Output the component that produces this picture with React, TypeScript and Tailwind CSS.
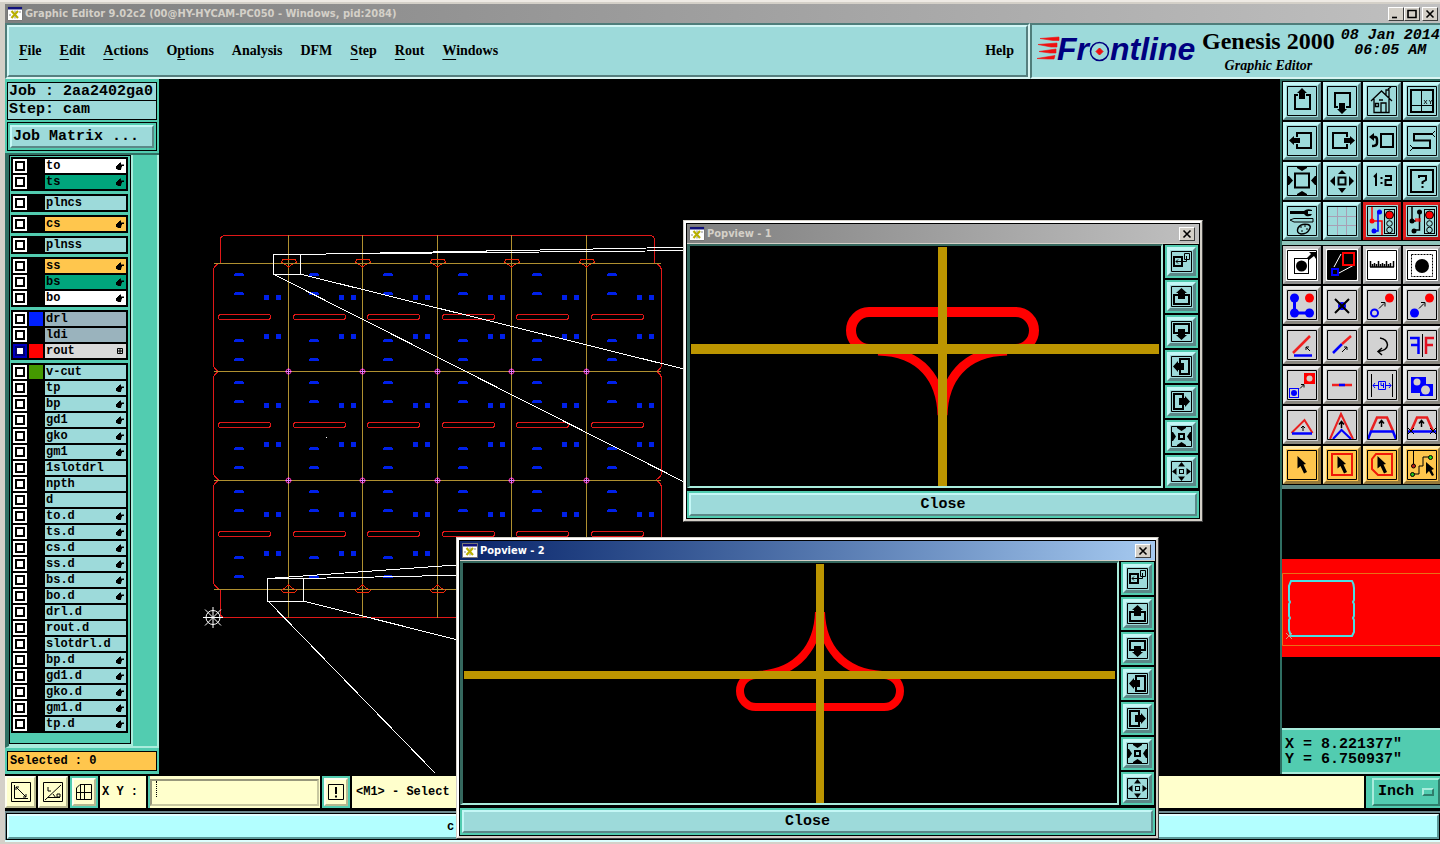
import type { ReactNode } from "react";

const MONO = "font-['Liberation_Mono',monospace]";
const SERIF = "font-['Liberation_Serif',serif]";
const TITLE = "font-['DejaVu_Sans_Condensed','DejaVu_Sans',sans-serif]";

const RAISED_AQUA =
  "border-[3px] border-t-[#c4f7f6] border-l-[#c4f7f6] border-r-[#5b8888] border-b-[#5b8888] bg-[#9ddada]";

/* ---------- layers ---------- */

type Layer = {
  name: string;
  tone?: "white" | "green" | "amber" | "slate" | "grey";
  hand?: boolean;
  swatch?: "blue" | "red" | "olive";
  active?: boolean;
};

const LAYER_GROUPS: Layer[][] = [
  [
    { name: "to", tone: "white", hand: true },
    { name: "ts", tone: "green", hand: true },
  ],
  [{ name: "plncs" }],
  [{ name: "cs", tone: "amber", hand: true }],
  [{ name: "plnss" }],
  [
    { name: "ss", tone: "amber", hand: true },
    { name: "bs", tone: "green", hand: true },
    { name: "bo", tone: "white", hand: true },
  ],
  [
    { name: "drl", tone: "slate", swatch: "blue" },
    { name: "ldi", tone: "slate" },
    { name: "rout", tone: "grey", swatch: "red", active: true },
  ],
  [
    { name: "v-cut", swatch: "olive" },
    { name: "tp", hand: true },
    { name: "bp", hand: true },
    { name: "gd1", hand: true },
    { name: "gko", hand: true },
    { name: "gm1", hand: true },
    { name: "1slotdrl" },
    { name: "npth" },
    { name: "d" },
    { name: "to.d", hand: true },
    { name: "ts.d", hand: true },
    { name: "cs.d", hand: true },
    { name: "ss.d", hand: true },
    { name: "bs.d", hand: true },
    { name: "bo.d", hand: true },
    { name: "drl.d" },
    { name: "rout.d" },
    { name: "slotdrl.d" },
    { name: "bp.d", hand: true },
    { name: "gd1.d", hand: true },
    { name: "gko.d", hand: true },
    { name: "gm1.d", hand: true },
    { name: "tp.d", hand: true },
  ],
];

const TONES = {
  white: "bg-white",
  green: "bg-[#00a57c]",
  amber: "bg-[#ffc64d]",
  slate: "bg-[#9ab3bd]",
  grey: "bg-[#d9d9d9]",
};

const SWATCHES = {
  blue: "bg-[#0020ff]",
  red: "bg-[#ff0000]",
  olive: "bg-[#449900]",
};

function LayerRow({ layer }: { layer: Layer }) {
  return (
    <label className="flex h-3.5 gap-0.5">
      <span className={`flex size-3.5 p-0.5 ${layer.active ? "bg-[#0000c0]" : "bg-white"}`}>
        <input
          type="checkbox"
          className={`block size-2.5 appearance-none border-2 bg-white ${layer.active ? "border-[#000070]" : "border-black"}`}
        />
      </span>
      <span className={`size-3.5 ${layer.swatch ? SWATCHES[layer.swatch] : "bg-black"}`} />
      <span
        className={`flex flex-1 items-center justify-between pr-0.5 pl-px text-[12px] leading-[14px] font-bold ${MONO} ${layer.tone ? TONES[layer.tone] : "bg-[#9ddada]"}`}
      >
        {layer.name}
        {layer.hand && (
          <svg width="8" height="8" viewBox="0 0 8 8" aria-hidden="true">
            <path d="M3 1h1.5V0H5v2.5h3V4H6v1H5.5v1.5H5V8H1.5V7H0V4h1V3h1V2h1z" />
          </svg>
        )}
        {layer.active && (
          <svg width="6" height="6" viewBox="0 0 6 6" aria-hidden="true" className="mr-px">
            <path d="M.5.5h5v5h-5zM3 0v6M0 3h6" fill="none" stroke="#000" />
          </svg>
        )}
      </span>
    </label>
  );
}

function LeftPanel() {
  return (
    <aside className="flex w-[154px] shrink-0 flex-col bg-[#52ccb0]">
      <div className={`flex flex-col border-b-2 border-[#2f6e62] px-0.5 pt-[3px] pb-0.5 text-[15px] ${MONO} font-bold`}>
        <div className="h-[19px] border border-black bg-[#9ddada] pl-px leading-[18px] whitespace-nowrap">
          Job : 2aa2402ga0
        </div>
        <div className="h-[19px] border border-t-0 border-black bg-[#9ddada] pl-px leading-[18px]">Step: cam</div>
        <div className="mt-0.5 border border-black p-0.5">
          <button className="block h-[23px] w-full border-2 border-t-[#c4f7f6] border-r-[#5b8888] border-b-[#5b8888] border-l-[#c4f7f6] bg-[#9ddada] px-px text-left leading-[18px]">
            Job Matrix ...
          </button>
        </div>
      </div>
      <div className="flex flex-1 items-start border-r-2 border-b-2 border-l-4 border-r-[#a9ecdc] border-b-[#a9ecdc] border-l-[#2f6e62]">
        <div className="w-[124px] border-r-2 border-b-2 border-[#a9ecdc]">
          <div className="flex flex-col gap-[3px] border border-black pt-px pr-0.5 pb-2.5 pl-px">
            {LAYER_GROUPS.map((group, i) => (
              <div key={i} className="flex flex-col gap-0.5 bg-black p-0.5">
                {group.map((layer) => (
                  <LayerRow key={layer.name} layer={layer} />
                ))}
              </div>
            ))}
          </div>
        </div>
      </div>
      <div className="px-0.5 pt-[3px] pb-[3px]">
        <div className={`h-5 border border-black bg-[#ffc64d] pl-0.5 text-[12px] leading-[18px] font-bold ${MONO}`}>
          Selected : 0
        </div>
      </div>
    </aside>
  );
}

/* ---------- board canvas ---------- */

const COLS = [213.5, 288.5, 362.5, 437.5, 511.5, 586.5];
const ROWS = [263.5, 371.5, 480.5];

function Board() {
  return (
    <svg
      viewBox="159 79 1121 694"
      preserveAspectRatio="xMinYMin meet"
      className="absolute inset-0 size-full"
      fill="none"
      shapeRendering="crispEdges"
      role="img"
      aria-label="Panel layout"
    >
      <g stroke="#e01818">
        <path d="M220.5 263V240Q220.5 235.5 225 235.5H650Q654.5 235.5 654.5 240V263" />
        <path d="M220.5 589V613Q220.5 617.5 225 617.5H650Q654.5 617.5 654.5 613V589" />
        {ROWS.map((y, i) => (
          <path
            key={y}
            d={`M219 ${y}Q213.5 ${y + 2} 213.5 ${y + 8}V${y + 101}Q213.5 ${y + 105} 219 ${i === 2 ? 589 : y + 108.5}M656 ${y}Q661.5 ${y + 2} 661.5 ${y + 8}V${y + 101}Q661.5 ${y + 105} 656 ${i === 2 ? 589 : y + 108.5}`}
          />
        ))}
      </g>
      {ROWS.map((y) =>
        COLS.map((x) => (
          <g key={`${x}-${y}`}>
            <rect x={x + 5} y={y + 51} width="52" height="5" rx="2.5" stroke="#e01818" />
            {[9.5, 28.5, 75.5, 94.5].map((dy) => (
              <path key={dy} d={`M${x + 21.5} ${y + dy}h8v1h1v2h-10v-2h1z`} fill="#0020e8" />
            ))}
            {[33.5, 72.5].map((dy) => (
              <path
                key={dy}
                d={`M${x + 50.5} ${y + dy - 2}h5v5h-5zM${x + 62.5} ${y + dy - 2}h5v5h-5z`}
                fill="#0020e8"
              />
            ))}
          </g>
        )),
      )}
      <g stroke="#b09030">
        {COLS.slice(1).map((x) => (
          <path key={x} d={`M${x} 235V618`} />
        ))}
        {[...ROWS, 589.5].map((y) => (
          <path key={y} d={`M214 ${y}H661`} />
        ))}
      </g>
      {COLS.slice(1).map((x) => (
        <g key={x}>
          <g stroke="#f02808">
            <path d={`M${x - 6} 263.5l-1-2 2-2.5h11l2 2.5-1 2M${x - 4} 264l4 3 4-3`} />
            <path d={`M${x - 6} 589.5l-1 1 2 2h11l2-2-1-1M${x - 5} 589l5-4 5 4`} />
          </g>
          {[371.5, 480.5].map((y) => (
            <g key={y} shapeRendering="auto">
              <circle cx={x} cy={y} r="2.5" stroke="#ff30b0" />
              <path d={`M${x - 3} ${y}h6M${x} ${y - 3}v6`} stroke="#e080ff" />
            </g>
          ))}
        </g>
      ))}
      <g stroke="#fff">
        <path d="M273.5 254.5h27v20h-27zM300 254.500L700 247M273 254.500L700 250.500M300 274L700 373M273 274L700 490" />
        <path d="M267.500 578.500h36v23h-36zM268 578.500L470 564M303 578.500L470 575M303 601L470 643M268 601L435 773" />
        <path d="M326 437.500h1" />
        <g shapeRendering="auto">
          <circle cx="213" cy="617.500" r="7" />
          <path d="M203 617.500h20M213 607v21M205 609.500l16 16M221 609.500l-16 16" />
        </g>
      </g>
    </svg>
  );
}

/* ---------- tool icons, drawn on a 30 by 30 grid ---------- */

const K = "#000";
const B = "#0000ff";
const R = "#ff0000";

const cursor = (
  <path d="M10.500 6L19 14L16.500 14.500L20 22L17 23.500L13.500 16L10.500 18.500Z" fill={K} />
);
const smallArrow = <path d="M12 18.500L17 13.500M14 12.500H18V16.500" fill="none" stroke={K} />;
const upArrow = (y: number) => (
  <path d={`M14.500 ${y + 7}V${y}M12 ${y + 3.5}L14.500 ${y + 0.5}L17 ${y + 3.5}`} fill="none" stroke={K} strokeWidth="1.500" />
);
const trafficLight = (
  <>
    <rect x="17.500" y="3.500" width="10" height="24" fill="none" stroke={K} />
    <circle cx="22.500" cy="9" r="4" fill={R} stroke={K} />
    <circle cx="22.500" cy="17.500" r="2.800" fill="none" stroke={K} />
    <circle cx="22.500" cy="24" r="2.800" fill="none" stroke={K} />
  </>
);

type Icon = [string, ReactNode];

const NAV_ICONS: Icon[] = [
  [
    "Pan up",
    <>
      <path d="M11 9H8V23H23V9H19" fill="none" stroke={K} strokeWidth="2" />
      <path d="M15 2L20 7H18V13H12V7H10Z" />
    </>,
  ],
  [
    "Pan down",
    <>
      <path d="M11 21H8V7H23V21H19" fill="none" stroke={K} strokeWidth="2" />
      <path d="M15 28L20 23H18V17H12V23H10Z" />
    </>,
  ],
  [
    "Home view",
    <path
      key="p"
      d="M4 15L14.500 5L25 15M7 13V26.500H22V13M14 26V17H19V26M8.500 17.500H11.500V20.500H8.500ZM19 9V4H22V12M21 3L24 1M12 14H16"
      fill="none"
      stroke={K}
      strokeWidth="1.300"
    />,
  ],
  [
    "Go to XY",
    <>
      <rect x="4" y="4" width="22" height="22" fill="none" stroke={K} strokeWidth="2" />
      <path d="M14.500 4V26M4 19.500H26" stroke={K} fill="none" />
      <path d="M17 14L20 18M20 14L17 18M22 14L23.500 16L25 14M23.500 16V18" stroke={K} fill="none" strokeWidth=".8" />
    </>,
  ],
  [
    "Pan left",
    <>
      <path d="M10 11V7H24V22H10V18" fill="none" stroke={K} strokeWidth="2" />
      <path d="M2 14.500L7 10V12H13V17H7V19Z" />
    </>,
  ],
  [
    "Pan right",
    <>
      <path d="M20 11V7H6V22H20V18" fill="none" stroke={K} strokeWidth="2" />
      <path d="M28 14.500L23 10V12H17V17H23V19Z" />
    </>,
  ],
  [
    "Previous view",
    <>
      <rect x="14" y="8" width="12" height="13" fill="none" stroke={K} strokeWidth="2" />
      <path d="M5 11H8Q10 11 10 14V17Q10 20 5 20" fill="none" stroke={K} strokeWidth="2.500" />
      <path d="M2 11L7 7V15Z" />
    </>,
  ],
  [
    "Serpentine",
    <>
      <path d="M25 8H7V14.500H23V22H6" fill="none" stroke={K} strokeWidth="2" />
      <path d="M25 8L28 5M25 8L28 11M6 22L3 19M6 22L3 25" fill="none" stroke={K} />
    </>,
  ],
  [
    "Zoom in",
    <>
      <rect x="8" y="7.500" width="14" height="14" fill="none" stroke={K} strokeWidth="2" />
      <path d="M10 1H20V2L15 5L10 2ZM10 29H20V28L15 25L10 28ZM1 10V19H2L6 14.500L2 10ZM29 10V19H28L24 14.500L28 10Z" />
    </>,
  ],
  [
    "Zoom out",
    <>
      <rect x="11.500" y="11.500" width="7" height="7" fill="none" stroke={K} strokeWidth="2" />
      <path d="M15 4L19 8H11ZM15 27L19 22H11ZM3 15L8 10V20ZM27 15L22 10V20Z" />
    </>,
  ],
  [
    "Scale one to two",
    <path key="p" d="M7 11L9 9V20M14.500 11V13M14.500 16V18M18 10H24V14H18.500V19H25" fill="none" stroke={K} strokeWidth="2" />,
  ],
  [
    "Query",
    <>
      <rect x="4" y="4" width="22" height="22" fill="none" stroke={K} strokeWidth="2" />
      <path d="M12 12V10H19V14L15.500 16V18M15.500 20V22" fill="none" stroke={K} strokeWidth="2" />
    </>,
  ],
  [
    "Settings",
    <>
      <path d="M3 5H18V8H3ZM17 5Q20 2 25 4V5H21V8H25Q24 11 19 10L17 8Z" />
      <path d="M3 14L7 12.500H26V16H7Z" fill="none" stroke={K} />
      <path d="M11 22Q14 17 21 18.500Q25 20 22 24Q20 28 14 28Q9 27 11 22Z" fill="none" stroke={K} strokeWidth="1.500" />
      <path d="M13 21H15M17 20H19M19 23H21M14 25H16" stroke={K} />
    </>,
  ],
  ["Grid", <path key="p" d="M10.500 1V29M19.500 1V29M1 10.500H29M1 19.500H29" stroke="#a8a0b4" fill="none" />],
];

const NET_ICONS: Icon[] = [
  [
    "Net compare",
    <>
      <path d="M5 1V15H15V29" fill="none" stroke={R} strokeWidth="1.500" />
      <path d="M13 6H11V25H7" fill="none" stroke={B} strokeWidth="1.500" />
      <circle cx="5" cy="15" r="2.500" fill={R} />
      <circle cx="12.500" cy="6" r="2.500" fill={B} />
      <circle cx="7" cy="25" r="2.500" fill={B} />
      {trafficLight}
    </>,
  ],
  [
    "Net measure",
    <>
      <path d="M5 1V15M12.500 6V24H7M5 15H9" fill="none" stroke={K} strokeWidth="1.500" />
      <path d="M8 14H13M9 12V16M11 12V16M13 12V16" stroke={R} fill="none" />
      <circle cx="5" cy="15" r="2.500" />
      <circle cx="12.500" cy="6" r="2.500" />
      <circle cx="7" cy="25" r="2.500" />
      {trafficLight}
    </>,
  ],
];

const MODE_ICONS: Icon[] = [
  [
    "Add feature",
    <>
      <rect x="7.500" y="8.500" width="14" height="15" fill="none" stroke={K} />
      <circle cx="14.500" cy="16" r="5.500" />
      <path d="M20 8L24 4L22 2H29V9L27 6L22 10Z" />
    </>,
  ],
  [
    "Popview",
    <>
      <path d="M1 1H29V29H1Z" />
      <path d="M7 17L14 4M12 23L27 15" stroke="#fff" fill="none" />
      <rect x="16" y="3" width="11" height="12" fill="none" stroke={R} strokeWidth="2" />
      <rect x="5" y="19" width="6" height="6" fill="none" stroke={B} strokeWidth="2" />
    </>,
  ],
  [
    "Measure",
    <path
      key="p"
      d="M3 17H27M3.500 11V17M5.500 14V17M7.500 13V17M9.500 14V17M11.500 11V17M13.500 14V17M15.500 13V17M17.500 14V17M19.500 11V17M21.500 14V17M23.500 13V17M26.500 11V17"
      stroke={K}
      fill="none"
      strokeWidth="1.500"
    />,
  ],
  [
    "Select feature",
    <>
      <rect x="4.500" y="4.500" width="21" height="22" fill="none" stroke={K} strokeDasharray="2 1" />
      <circle cx="15" cy="16" r="7" />
    </>,
  ],
];

const EDIT_ICONS: Icon[] = [
  [
    "Copy to layer",
    <>
      <path d="M7.500 8V23H22" fill="none" stroke={B} strokeWidth="3" />
      <circle cx="7.500" cy="8" r="4.500" fill={B} />
      <circle cx="7.500" cy="23" r="4.500" fill={B} />
      <circle cx="22.500" cy="23" r="4.500" fill={B} />
      <circle cx="22.500" cy="8" r="4.500" fill={R} />
    </>,
  ],
  [
    "Delete",
    <>
      <circle cx="15" cy="16" r="4" fill={B} />
      <path d="M8 9L22 23M22 9L8 23" stroke={K} fill="none" strokeWidth="2" />
    </>,
  ],
  [
    "Move",
    <>
      <circle cx="22.500" cy="8" r="4.500" fill={R} />
      <circle cx="7.500" cy="23" r="3.500" fill="none" stroke={B} strokeWidth="2" />
      {smallArrow}
    </>,
  ],
  [
    "Copy",
    <>
      <circle cx="22.500" cy="8" r="4.500" fill={R} />
      <circle cx="7.500" cy="23" r="4.500" fill={B} />
      {smallArrow}
    </>,
  ],
  [
    "Change angle",
    <>
      <path d="M6 23L23 6" stroke="#f02020" fill="none" strokeWidth="2.500" />
      <path d="M7 25.500H25" stroke={B} fill="none" strokeWidth="2.500" />
      <path d="M23 21L19 17M19 20V17H22" stroke={K} fill="none" />
    </>,
  ],
  [
    "Stretch line",
    <>
      <path d="M6 23L15 14" stroke={B} fill="none" strokeWidth="2.500" />
      <path d="M15 14L24 6" stroke="#f02020" fill="none" strokeWidth="2.500" />
      <path d="M15 22L20 17M17 17H20V20" stroke={K} fill="none" />
    </>,
  ],
  [
    "Rotate",
    <path key="p" d="M13 8Q20 9 20.500 15Q20 20 12 21.500M15 18L11 21.500L15 25" stroke={K} fill="none" strokeWidth="1.500" />,
  ],
  [
    "Mirror",
    <>
      <path d="M3 8H11.500V24M4 15H11" stroke={B} fill="none" strokeWidth="2.500" />
      <path d="M27 8H19V24M26 15H19" stroke="#e01020" fill="none" strokeWidth="2.500" />
      <path d="M15.500 4V27" stroke={K} fill="none" />
    </>,
  ],
  [
    "Substitute",
    <>
      <rect x="2.500" y="18.500" width="9" height="9" fill="none" stroke={B} />
      <circle cx="7" cy="23" r="3" fill={B} />
      <rect x="17" y="3" width="11" height="11" fill={R} />
      <circle cx="22.500" cy="8.500" r="3" fill="#d4d0c8" />
      <path d="M13 18.500L16.500 15M14 14.500H17V17.500" stroke={K} fill="none" />
    </>,
  ],
  [
    "Break line",
    <>
      <path d="M5 15H25" stroke="#f02020" fill="none" strokeWidth="2.500" />
      <path d="M12 15H18" stroke={B} fill="none" strokeWidth="2.500" />
    </>,
  ],
  [
    "Spacing",
    <>
      <path d="M4.500 4V27M25.500 4V27" stroke={K} fill="none" />
      <path
        d="M11.500 11.500H18.500V19.500H11.500ZM14 12.500V15.500H17M16.500 13V18M11 15.500H6M8 13L6 15.500L8 18M19 15.500H24M22 13L24 15.500L22 18"
        stroke={B}
        fill="none"
      />
    </>,
  ],
  [
    "Merge",
    <>
      <path d="M4 7H19V14H26V26H13V23H4Z" fill={B} />
      <circle cx="10" cy="12" r="3.500" fill="#d4d0c8" />
      <circle cx="18.500" cy="20" r="4.500" fill="#d4d0c8" />
    </>,
  ],
  [
    "Move triangle",
    <>
      <path d="M4.500 23L17.500 10L25.500 23" stroke="#e82020" fill="none" strokeWidth="2" />
      <path d="M5 23.500H25" stroke={B} fill="none" strokeWidth="2.500" />
      <path d="M16 21V16M14 18L16 16L18 18" stroke={K} fill="none" />
    </>,
  ],
  [
    "Move corner",
    <>
      <path d="M3 29L14 4L26 29" stroke="#e82020" fill="none" strokeWidth="2" />
      <path d="M6 29L14.500 20L24 29" stroke={B} fill="none" strokeWidth="2" />
      {upArrow(11)}
    </>,
  ],
  [
    "Move trapezoid",
    <>
      <path d="M4 21L10 7.500H20L26 21" stroke="#e82020" fill="none" strokeWidth="2.500" />
      <path d="M1 29L4 21.500H26L29 29" stroke={B} fill="none" strokeWidth="2.500" />
      {upArrow(10)}
    </>,
  ],
  [
    "Move edge",
    <>
      <path d="M4 21L10 7.500H20L26 21" stroke="#e82020" fill="none" strokeWidth="2.500" />
      <path d="M1 21.500H29" stroke={B} fill="none" strokeWidth="2.500" />
      <path d="M1 18L7 24M7 18L1 24M23 18L29 24M29 18L23 24" stroke={K} fill="none" />
      {upArrow(10)}
    </>,
  ],
];

const PICK_ICONS: Icon[] = [
  ["Pick", cursor],
  [
    "Pick in rectangle",
    <>
      <rect x="5" y="4" width="20" height="21" fill="none" stroke="#f01808" strokeWidth="2" />
      {cursor}
    </>,
  ],
  [
    "Pick in polygon",
    <>
      <path d="M9 4H25V25H11L5 19V9Z" fill="none" stroke="#f01808" strokeWidth="2" />
      {cursor}
    </>,
  ],
  [
    "Pick net",
    <>
      <path d="M6.500 1V15M5 24H12V16H16V7H23" fill="none" stroke={K} />
      <circle cx="6.500" cy="16" r="2" fill="#c02018" stroke={K} />
      <circle cx="5.500" cy="24.500" r="2" fill="#20c020" stroke={K} />
      <circle cx="23.500" cy="7.500" r="2" fill="#20e020" stroke={K} />
      <path d="M19 12L27 19L24.500 20L27 25L25 26L22 21L19 24Z" />
    </>,
  ],
];

const FACES = {
  aqua: RAISED_AQUA,
  red: "border-[3px] border-t-[#e02020] border-l-[#e02020] border-r-[#b81818] border-b-[#b81818] bg-[#9ddada]",
  white: "border-[3px] border-t-[#c8c8c8] border-l-[#c8c8c8] border-r-[#909090] border-b-[#909090] bg-white",
  grey: "border-[3px] border-t-[#ececec] border-l-[#ececec] border-r-[#8a8880] border-b-[#8a8880] bg-[#d2d2d2]",
  amber: "border-[3px] border-t-[#ffe9a8] border-l-[#ffe9a8] border-r-[#96793a] border-b-[#96793a] bg-[#ffc64d]",
};

function ToolButtons({ icons, face }: { icons: Icon[]; face: keyof typeof FACES }) {
  return (
    <>
      {icons.map(([name, art]) => (
        <button key={name} aria-label={name} className={`flex size-[38px] items-center justify-center ${FACES[face]}`}>
          <svg width="30" height="30" viewBox="0 0 30 30" className="shrink-0" aria-hidden="true">
            {art}
            <path d="M.5.5H29.500V29.500H.5Z" fill="none" stroke={K} />
          </svg>
        </button>
      ))}
    </>
  );
}

function RightPanel() {
  return (
    <aside className="flex w-40 shrink-0 flex-col overflow-hidden border-l-2 border-[#2f6e62] bg-black">
      <div className="grid grid-cols-[repeat(4,38px)] gap-0.5 border-t-2 border-b-4 border-t-[#2f6e62] border-b-[#8fc4ba] py-px pl-px">
        <ToolButtons icons={NAV_ICONS} face="aqua" />
        <ToolButtons icons={NET_ICONS} face="red" />
      </div>
      <div className="grid grid-cols-[repeat(4,38px)] gap-0.5 border-b-4 border-[#5d8580] py-px pl-px">
        <ToolButtons icons={MODE_ICONS} face="white" />
        <ToolButtons icons={EDIT_ICONS} face="grey" />
        <ToolButtons icons={PICK_ICONS} face="amber" />
      </div>
      <div className="flex flex-1 flex-col justify-center pb-0.5">
        <svg viewBox="1282 559 158 98" className="block w-full" fill="none" role="img" aria-label="Overview">
          <path d="M1282 559H1440V657H1282Z" fill="#ff0000" />
          <path d="M1442 573.500H1282.500V645.500H1442" stroke="#e87018" />
          <path
            d="M1291 581H1352Q1354 584 1354 588V600L1353 602L1354 604V616L1353 618L1354 620V632L1352 636H1291L1289 630V620L1290 618L1289 616V604L1290 602L1289 600V586Z"
            stroke="#4ae0e4"
            strokeWidth="2"
          />
          <path d="M1286 633L1292 639M1292 633L1286 639" stroke="#d0a080" />
        </svg>
      </div>
      <output
        className={`block border-y-2 border-[#a9ecdc] bg-[#52ccb0] px-[3px] pt-[7px] pb-[5px] text-[15px] leading-[15px] whitespace-nowrap ${MONO} font-bold`}
      >
        <span className="block">X = 8.221377"</span>
        <span className="block">Y = 6.750937"</span>
      </output>
    </aside>
  );
}

/* ---------- popview windows ---------- */

const VIEW_ICONS: Icon[] = [
  [
    "Zoom box",
    <>
      <path d="M3 6H11V15H3Z" fill="none" stroke={K} strokeWidth="2" />
      <path d="M13.500 2.500H18.500V8.500H13.500ZM5 10.500H15.500V5M7 8.500L5 10.500L7 12.500" fill="none" stroke={K} />
    </>,
  ],
  [
    "Up",
    <>
      <path d="M7 9H3V18H18V9H14" fill="none" stroke={K} strokeWidth="2" />
      <path d="M10.500 2L16 7H14V13H7V7H5Z" />
    </>,
  ],
  [
    "Down",
    <>
      <path d="M7 12H3V3H18V12H14" fill="none" stroke={K} strokeWidth="2" />
      <path d="M10.500 19L16 14H14V8H7V14H5Z" />
    </>,
  ],
  [
    "Left",
    <>
      <path d="M9 7V3H18V18H9V14" fill="none" stroke={K} strokeWidth="2" />
      <path d="M2 10.500L7 5V7H13V14H7V16Z" />
    </>,
  ],
  [
    "Right",
    <>
      <path d="M12 7V3H3V18H12V14" fill="none" stroke={K} strokeWidth="2" />
      <path d="M19 10.500L14 5V7H8V14H14V16Z" />
    </>,
  ],
  [
    "In",
    <>
      <rect x="8" y="8" width="5" height="5" fill="none" stroke={K} strokeWidth="2" />
      <path d="M6 1H15V2L10.500 5L6 2ZM6 20H15V19L10.500 16L6 19ZM1 6V15H2L5 10.500L2 6ZM20 6V15H19L16 10.500L19 6Z" />
    </>,
  ],
  [
    "Out",
    <>
      <rect x="8.500" y="8.500" width="4" height="4" fill="none" stroke={K} />
      <path d="M10.500 1L14 5.500H7ZM10.500 20L14 15.500H7ZM1 10.500L5.500 7V14ZM20 10.500L15.500 7V14Z" />
    </>,
  ],
];

function AppIcon() {
  return (
    <svg width="16" height="15" viewBox="0 0 16 15" aria-hidden="true" className="shrink-0">
      <path d="M.5.5h15v14H.5z" fill="#fff" stroke="#777" />
      <path d="M1 1h14v2.500H1z" fill="#10107a" />
      <path d="M4.500 5l6.500 7M11 5l-6.500 7" stroke="#b8b000" strokeWidth="2.200" />
      <path d="M8 4.500v2M8 10.500v2M12 6h2M2 9h2" stroke="#888" />
    </svg>
  );
}

function CaptionButton({ label, d }: { label: string; d: string }) {
  return (
    <button
      aria-label={label}
      className="flex h-3.5 w-4 items-center justify-center border border-t-white border-r-[#404040] border-b-[#404040] border-l-white bg-[#d4d0c8]"
    >
      <svg width="10" height="10" viewBox="0 0 10 10" fill="none" stroke="#000" aria-hidden="true">
        <path d={d} strokeWidth="1.600" />
      </svg>
    </button>
  );
}

const CLOSE_D = "M1.500 1.500l7 7M8.500 1.500l-7 7";

function Popview({
  title,
  place,
  bar,
  viewBox,
  children,
}: {
  title: string;
  place: string;
  bar: string;
  viewBox: string;
  children: ReactNode;
}) {
  return (
    <section
      className={`absolute flex flex-col border border-t-[#d4d0c8] border-r-[#404040] border-b-[#404040] border-l-[#d4d0c8] ${place}`}
    >
      <div className="flex flex-1 flex-col border-2 border-t-white border-r-[#d4d0c8] border-b-[#d4d0c8] border-l-white bg-black p-px">
        <header className={`flex h-[19px] items-center gap-0.5 pr-1 pl-0.5 ${bar}`}>
          <AppIcon />
          <h2 className={`flex-1 text-[11px] leading-4 font-bold ${TITLE}`}>{title}</h2>
          <CaptionButton label="Close window" d={CLOSE_D} />
        </header>
        <div className="flex flex-1 gap-0.5 border-t border-[#d4d0c8] pb-[3px]">
          <div className="flex-1 border-2 border-l-[3px] border-t-[#35685e] border-r-[#a9ecdc] border-b-[#a9ecdc] border-l-[#35685e] bg-black">
            <svg viewBox={viewBox} className="block w-full" fill="none" role="img" aria-label={`${title} contents`}>
              {children}
            </svg>
          </div>
          <div className="flex flex-col gap-0.5 pt-px pr-px">
            {VIEW_ICONS.map(([name, art]) => (
              <div key={name} className="bg-[#52ccb0] p-0.5">
                <button aria-label={name} className={`flex size-[29px] items-center justify-center ${RAISED_AQUA}`}>
                  <svg width="21" height="21" viewBox="0 0 21 21" className="shrink-0" aria-hidden="true">
                    {art}
                    <path d="M.5.5H20.500V20.500H.5Z" fill="none" stroke={K} />
                  </svg>
                </button>
              </div>
            ))}
          </div>
        </div>
        <div className="bg-[#52ccb0] p-0.5">
          <button
            className={`block h-[23px] w-full border-2 border-t-[#c4f7f6] border-r-[#5b8888] border-b-[#5b8888] border-l-[#c4f7f6] bg-[#9ddada] text-[15px] leading-[18px] ${MONO} font-bold`}
          >
            Close
          </button>
        </div>
      </div>
    </section>
  );
}

/* ---------- header ---------- */

const MENUS: [string, string, string][] = [
  ["", "F", "ile"],
  ["", "E", "dit"],
  ["", "A", "ctions"],
  ["O", "p", "tions"],
  ["Analysis", "", ""],
  ["DFM", "", ""],
  ["", "S", "tep"],
  ["", "R", "out"],
  ["", "W", "indows"],
];

function Logo() {
  return (
    <svg width="162" height="44" viewBox="1036 31 162 44" role="img" aria-label="Frontline" className="shrink-0">
      <path
        d="M1040 40.500L1059 39V42.500H1053ZM1038 46.500L1057 45V49H1051ZM1039 53.500L1056 51V55H1050ZM1037 60.500L1055 57.500L1054 61H1048Z"
        fill="#f01010"
        stroke="#f01010"
        strokeWidth=".6"
      />
      <g className="font-['Liberation_Sans',sans-serif] text-[32px] font-bold italic" fill="#000080">
        <text x="1057" y="62">
          Fr
        </text>
        <text x="1110" y="62">
          ntline
        </text>
      </g>
      <circle cx="1099.500" cy="53.500" r="9" fill="none" stroke="#000080" strokeWidth="1.500" />
      <path d="M1099.500 50L1103 53.500L1099.500 57L1096 53.500Z" fill="#f01010" stroke="#f01010" />
    </svg>
  );
}

function Header() {
  return (
    <div className={`flex h-14 shrink-0 ${SERIF}`}>
      <nav className="flex flex-1 border-2 border-t-[#4f7d7a] border-r-[#d9f5f3] border-b-[#d9f5f3] border-l-[#4f7d7a] bg-[#9ddada]">
        <div className="flex flex-1 items-center border-2 border-t-[#d2f7f6] border-r-[#567f7f] border-b-[#567f7f] border-l-[#d2f7f6] pr-3 pl-2.5 text-[14px] leading-5 font-bold">
          <ul className="flex flex-1 gap-[18px]">
            {MENUS.map(([pre, key, post]) => (
              <li key={pre + key + post}>
                <button>
                  {pre}
                  <span className="underline underline-offset-4">{key}</span>
                  {post}
                </button>
              </li>
            ))}
          </ul>
          <button>Help</button>
        </div>
      </nav>
      <div className="flex w-[410px] shrink-0 gap-1 overflow-hidden border-y-2 border-l-2 border-t-[#4f7d7a] border-b-[#d9f5f3] border-l-[#4f7d7a] bg-[#9ddada] pl-1">
        <div className="flex items-center">
          <Logo />
        </div>
        <div className="flex shrink-0 flex-col items-center">
          <h1 className="text-[24px] leading-8 font-bold whitespace-nowrap">Genesis 2000</h1>
          <p className="text-[14px] leading-[18px] font-bold italic">Graphic Editor</p>
        </div>
        <div className={`shrink-0 pt-[3px] pl-0.5 text-center text-[15px] leading-[15px] font-bold italic ${MONO}`}>
          <div>08 Jan 2014</div>
          <div>06:05 AM</div>
        </div>
      </div>
    </div>
  );
}

/* ---------- command bar ---------- */

function SmallIcon({ d }: { d: string }) {
  return (
    <svg width="20" height="20" viewBox="0 0 20 20" fill="none" stroke="#000" aria-hidden="true">
      <path d={d} />
    </svg>
  );
}

const CREAM_FACE =
  "flex items-center justify-center border-2 border-t-[#fffff0] border-l-[#fffff0] border-r-[#b8b890] border-b-[#b8b890] bg-[#ffffcc]";

function CommandBar() {
  return (
    <div className={`flex h-[37px] shrink-0 gap-0.5 bg-black pt-0.5 pb-[3px] text-[12px] font-bold ${MONO}`}>
      <button aria-label="Snap off" className={`w-[31px] ${CREAM_FACE}`}>
        <SmallIcon d="M.5.5H19.500V19.500H.5ZM3.500 3V16.500H17M5 5L15 15M5 8V5H8M15 12V15H12" />
      </button>
      <button aria-label="Angle snap" className={`w-[30px] ${CREAM_FACE}`}>
        <SmallIcon d="M.5.5H19.500V19.500H.5ZM2 18L18 3M5 5V9H8M5 15.500H17M10 12L13 16M14 12H17V15H14Z" />
      </button>
      <div className="flex w-7 bg-[#52ccb0] p-0.5">
        <button aria-label="Grid snap" className={`flex-1 ${CREAM_FACE}`}>
          <SmallIcon d="M6 2.500H17.500V17.500H2.500V6L6 2.500M10.500 2V18M2 10.500H18M6.500 3V17" />
        </button>
      </div>
      <label htmlFor="coords" className="flex w-[46px] items-center bg-[#ffffcc] pl-0.5 whitespace-nowrap">
        X Y :
      </label>
      <div className="flex w-[172px] border-l-2 border-[#52ccb0] bg-[#ffffcc] pt-[3px] pr-px pb-0.5">
        <div className="flex w-full items-start border-2 border-t-[#98987c] border-r-[#c8c8a0] border-b-[#c8c8a0] border-l-[#98987c] pl-1">
          <span className="h-4 border-l border-dotted border-black" />
          <input id="coords" type="text" className="h-full w-full min-w-0 bg-transparent outline-none" />
        </div>
      </div>
      <div className="flex w-7 bg-[#52ccb0] p-0.5">
        <button aria-label="Messages" className={`flex-1 ${CREAM_FACE}`}>
          <SmallIcon d="M2.500 2.500H17.500V17.500H2.500ZM9.500 5V12M9.500 13.500V15.500M10.500 5V12M10.500 13.500V15.500" />
        </button>
      </div>
      <div className="flex flex-1 items-center bg-[#ffffcc] pl-1 whitespace-pre">{"<M1> - Select :"}</div>
      <div className="flex w-[74px] bg-[#52ccb0] py-0.5 pl-1.5">
        <button
          className={`flex flex-1 items-center justify-between border-2 border-t-[#a9ecdc] border-r-[#2f7e6c] border-b-[#2f7e6c] border-l-[#a9ecdc] pr-1 pl-1 text-[15px] ${MONO}`}
        >
          Inch
          <span className="h-2 w-3 border-2 border-t-[#a9ecdc] border-r-[#2f7e6c] border-b-[#2f7e6c] border-l-[#a9ecdc]" />
        </button>
      </div>
    </div>
  );
}

export default function App() {
  return (
    <div className="relative flex min-h-screen flex-col overflow-hidden border-t-2 border-b-2 border-t-[#eeeae4] border-b-[#606060] bg-[#d4d0c8] text-black">
      <div className="flex flex-1 flex-col pt-0.5 pl-[5px]">
        <header className="flex h-[19px] shrink-0 items-center gap-0.5 bg-linear-to-r from-[#808080] to-[#c0c0c0] pr-0.5 pl-0.5">
          <AppIcon />
          <span className={`flex-1 text-[11px] leading-4 font-bold whitespace-nowrap text-[#d4d0c8] ${TITLE}`}>
            Graphic Editor 9.02c2 (00@HY-HYCAM-PC050 - Windows, pid:2084)
          </span>
          <div className="flex">
            <CaptionButton label="Minimize" d="M1 8.500h5" />
            <CaptionButton label="Maximize" d="M1 1.500h8v7H1z" />
            <span className="w-0.5" />
            <CaptionButton label="Close" d={CLOSE_D} />
          </div>
        </header>
        <Header />
        <main className="flex flex-1 bg-black">
          <LeftPanel />
          <div className="relative flex-1 overflow-hidden bg-black">
            <Board />
          </div>
          <RightPanel />
        </main>
        <CommandBar />
        <footer className="mb-1 border-t-2 border-b-2 border-t-[#6d8a8e] border-b-[#dff] bg-[#6d8a8e] pl-px">
          <div className="border border-black">
            <div
              className={`h-[25px] border-2 border-t-[#e0ffff] border-r-[#5b9898] border-b-[#5b9898] border-l-[#e0ffff] bg-[#b3ffff] pl-[438px] text-[12px] leading-[22px] font-bold ${MONO}`}
            >
              c:
            </div>
          </div>
        </footer>
      </div>

      <Popview
        title="Popview - 1"
        place="left-[683px] top-[218px] w-[520px]"
        bar="bg-linear-to-r from-[#808080] to-[#c0c0c0] text-[#d4d0c8]"
        viewBox="690 246 471 240"
      >
        <g stroke="#ff0000">
          <path d="M869 349A18 18.500 0 0 1 869 312H1016A18 18.500 0 0 1 1016 349" strokeWidth="10" />
          <path d="M878 351C922 352 941 380 942 415M1007 351C963 352 944 380 943 415" strokeWidth="9" />
        </g>
        <path d="M942.500 247V486" stroke="#bc9500" strokeWidth="9" />
        <path d="M691 349H1159" stroke="#bc9500" strokeWidth="10" />
      </Popview>

      <Popview
        title="Popview - 2"
        place="left-[456px] top-[535px] w-[703px]"
        bar="bg-linear-to-r from-[#0a246a] to-[#a6caf0] text-white"
        viewBox="463 563 654 240"
      >
        <g stroke="#ff0000">
          <path d="M756 675A16 16 0 0 0 756 707H884A16 16 0 0 0 884 675" strokeWidth="8" />
          <path d="M758 675C798 673 818 646 819 612M882 675C842 673 822 646 821 612" strokeWidth="8" />
        </g>
        <path d="M820 564V803" stroke="#bc9500" strokeWidth="8" />
        <path d="M464 675H1115" stroke="#bc9500" strokeWidth="8" />
      </Popview>
    </div>
  );
}
